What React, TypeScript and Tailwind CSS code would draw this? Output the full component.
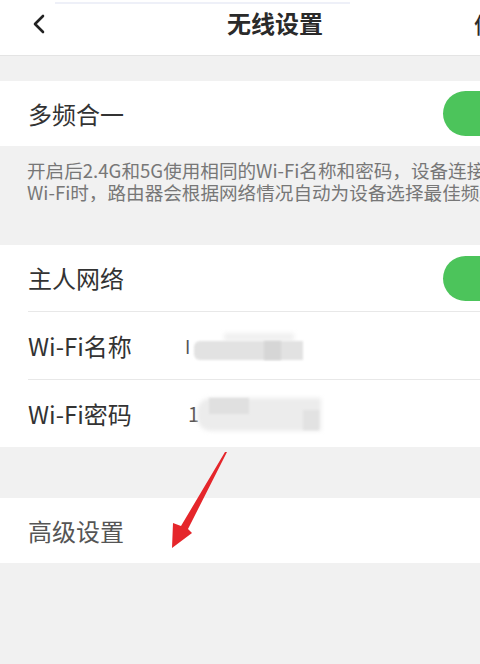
import React from "react";

const FONT = { fontFamily: '"Noto Sans CJK SC", "Noto Sans", sans-serif' };

function Toggle() {
  return <div className="ml-auto mr-[-57px] h-[45px] w-[94px] shrink-0 rounded-full bg-[#4cc45b]" />;
}

export default function App() {
  return (
    <div className="relative h-[664px] w-[480px] overflow-hidden bg-[#f1f1f1]" style={FONT}>
      {/* header */}
      <div className="relative flex h-[56px] items-center border-b border-[#e4e4e4] bg-white">
        <div className="absolute left-[55px] top-[2px] h-[2px] w-[295px] bg-[#eef0f8]" />
        <svg className="ml-[30px] mt-[-8px] shrink-0" width="18" height="20" viewBox="0 0 18 20">
          <path d="M13 2 L5 10 L13 18" fill="none" stroke="#222" strokeWidth="2.6" strokeLinecap="round" strokeLinejoin="round" />
        </svg>
        <span className="ml-[179px] mt-[-10px] shrink-0 whitespace-nowrap text-[24px] font-bold leading-none text-[#2a2a2a]">无线设置</span>
        <span className="ml-[151px] mt-[-10px] shrink-0 whitespace-nowrap text-[22px] font-medium leading-none text-[#2a2a2a]">信</span>
      </div>

      <div className="h-[25px]" />

      {/* 多频合一 */}
      <div className="flex h-[65px] items-center overflow-hidden bg-white pl-[28px]">
        <span className="text-[24px] leading-none text-[#333]">多频合一</span>
        <Toggle />
      </div>

      {/* description */}
      <div className="h-[99px] overflow-hidden pl-[27px] pt-[13px] text-[18.6px] leading-[22px] text-[#777]">
        <div className="whitespace-nowrap">开启后2.4G和5G使用相同的Wi-Fi名称和密码，设备连接</div>
        <div className="whitespace-nowrap">Wi-Fi时，路由器会根据网络情况自动为设备选择最佳频段</div>
      </div>

      {/* main network */}
      <div className="bg-white">
        <div className="flex h-[66px] items-center overflow-hidden pl-[28px]">
          <span className="text-[24px] leading-none text-[#333]">主人网络</span>
          <Toggle />
        </div>
        <div className="ml-[28px] h-px bg-[#e8e8e8]" />
        <div className="flex h-[67px] items-center pl-[28px]">
          <span className="w-[157px] shrink-0 text-[24px] leading-none text-[#333]">Wi-Fi名称</span>
          <span className="text-[18px] leading-none text-[#555]">I</span>
          <div className="relative ml-[4px] h-[30px] w-[112px]">
            <div className="absolute left-[30px] top-[2px] h-[8px] w-[70px] bg-[#f0f0f0] blur-[2px]" />
            <div className="absolute left-0 top-[10px] h-[19px] w-[109px] rounded-l-[6px] bg-[#e2e2e2] blur-[1px]" />
            <div className="absolute left-[70px] top-[10px] h-[19px] w-[17px] bg-[#d6d6d6] blur-[1px]" />
          </div>
        </div>
        <div className="ml-[28px] h-px bg-[#e8e8e8]" />
        <div className="flex h-[67px] items-center pl-[28px]">
          <span className="w-[160px] shrink-0 text-[24px] leading-none text-[#333]">Wi-Fi密码</span>
          <span className="text-[20px] leading-none text-[#555]">1</span>
          <div className="relative ml-[-2px] h-[36px] w-[130px]">
            <div className="absolute left-0 top-[2px] h-[33px] w-[124px] rounded-l-[14px] bg-[#ececec] blur-[2px]" />
            <div className="absolute left-[12px] top-[2px] h-[16px] w-[40px] bg-[#e0e0e0] blur-[1px]" />
            <div className="absolute left-[106px] top-[14px] h-[20px] w-[16px] bg-[#e2e2e2] blur-[1px]" />
          </div>
        </div>
      </div>

      <div className="h-[51px]" />

      {/* advanced */}
      <div className="flex h-[65px] items-center bg-white pl-[28px]">
        <span className="text-[24px] leading-none text-[#555]">高级设置</span>
      </div>

      {/* red annotation arrow */}
      <svg className="pointer-events-none absolute left-0 top-0" width="480" height="664" viewBox="0 0 480 664">
        <polygon
          points="227,452 188,529 192,533 172,548 173,523 181,526 225,452"
          fill="#e5262b"
        />
      </svg>
    </div>
  );
}
